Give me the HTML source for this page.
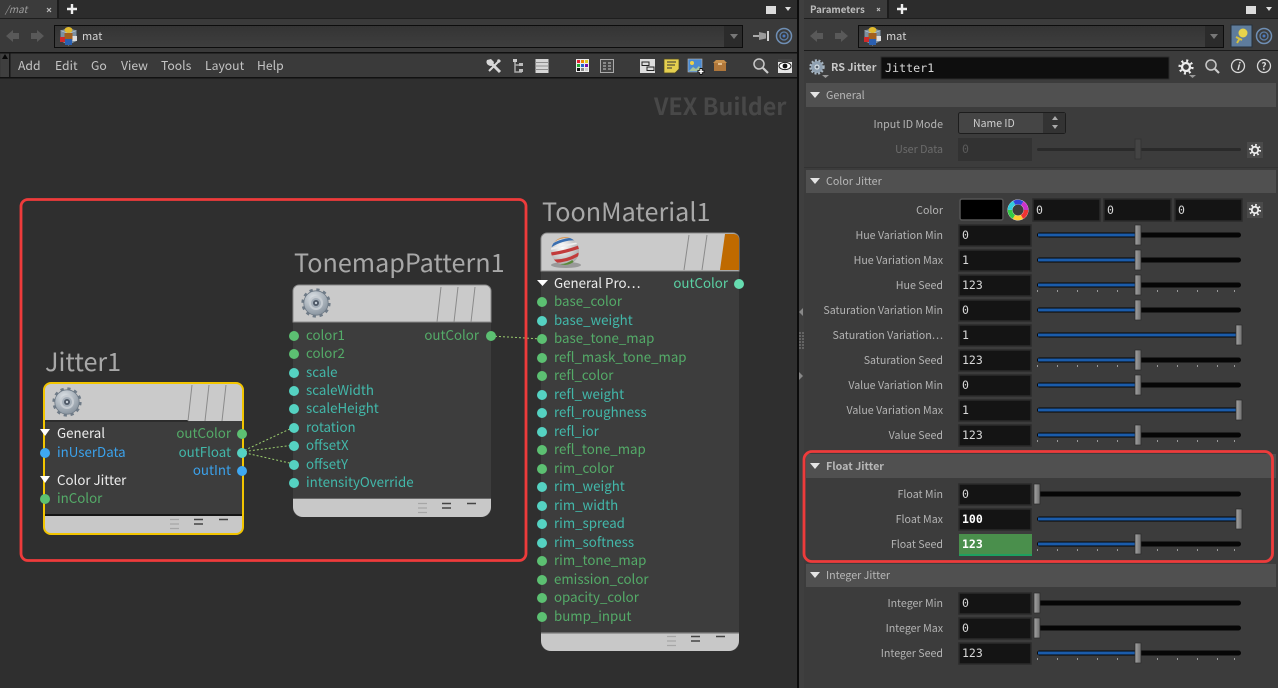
<!DOCTYPE html>
<html><head><meta charset="utf-8"><style>
html,body{margin:0;padding:0;background:#2f2f2f;width:1278px;height:688px;overflow:hidden}
svg{display:block;position:absolute;left:0;top:0}
text{font-family:"Noto Sans CJK JP","Liberation Sans",sans-serif;white-space:pre}
.m{font-size:12.2px;fill:#c4c4c4}
.t{font-size:25.200px;fill:#a8a8a8}
.n{font-size:13.300px}
.g{fill:#54ab68}.c{fill:#42b8aa}.b{fill:#3ba2ec}.w{fill:#ececec}
.l{font-size:10.650px;fill:#b4b4b4;text-anchor:end}
.s{font-size:10.700px;fill:#b8b8b8}
.v{font-family:"DejaVu Sans Mono","Liberation Mono",monospace;font-size:11.500px;fill:#d8d8d8}
</style></head><body>
<svg width="1278" height="688" viewBox="0 0 1278 688" xmlns="http://www.w3.org/2000/svg">
<defs>
<linearGradient id="fld" x1="0" y1="0" x2="0" y2="1"><stop offset="0" stop-color="#343434"/><stop offset="1" stop-color="#3e3e3e"/></linearGradient>
<linearGradient id="hnd" x1="0" y1="0" x2="1" y2="0"><stop offset="0" stop-color="#a4a4a4"/><stop offset="1" stop-color="#6e6e6e"/></linearGradient>
<radialGradient id="ball" cx=".4" cy=".35" r=".75"><stop offset="0" stop-color="#fff"/><stop offset="1" stop-color="#a0a0a0"/></radialGradient>
<radialGradient id="metal" cx=".4" cy=".3" r=".8"><stop offset="0" stop-color="#dfe4e8"/><stop offset="1" stop-color="#7e8a96"/></radialGradient>
<clipPath id="bc"><circle cx="565" cy="251" r="14"/></clipPath>
<g id="gear"><circle r="13" fill="none" stroke="#6f7b87" stroke-width="3.200" stroke-dasharray="3.200 3.600"/><circle r="12.200" fill="url(#metal)"/><circle r="12.200" fill="none" stroke="#6d7985" stroke-width=".8"/><circle r="7" fill="#c6ccd2"/><circle r="5" fill="#a4aeb8"/><circle r="3" fill="#4e5866"/><circle r="1.200" fill="#c8d0d8"/></g>
<g id="gs"><circle r="6" fill="#8fa0b0"/><circle r="6.600" fill="none" stroke="#a8b6c2" stroke-width="2.200" stroke-dasharray="2 1.600"/><circle r="2.600" fill="#d4dce2"/><circle r="1.300" fill="#55606c"/></g>
<g id="cog"><circle r="4" fill="none" stroke="#ececec" stroke-width="2.300"/><circle r="6.300" fill="none" stroke="#ececec" stroke-width="2.600" stroke-dasharray="2 2.950"/></g>
<g id="mat"><path d="M0 -8l8 2.500v10.500l-8 4l-8-4v-10.500z" fill="#8fa6bb" opacity=".8"/><path d="M-8 -5.500l8 3 8-3M0 -2.500v12" stroke="#c2ced8" stroke-width=".6" fill="none"/><ellipse cx="0" cy="-6" rx="4" ry="3" fill="#e0ba2e"/><rect x="-4" y="-3" width="8" height="7" fill="#a2601e"/><rect x="-3.500" y="3" width="7" height="6" fill="#2a5fb0"/><rect x="-8.500" y="1" width="5" height="5" fill="#cf2a2a"/><rect x="4" y="0" width="4.500" height="5" fill="#ddd"/></g>
<g id="sl"><rect x="1037" y="-2.500" width="204" height="5" rx="2.500" fill="#060606"/></g>
<g id="hn"><rect x="-3" y="-10" width="6" height="20" fill="url(#hnd)" stroke="#2a2a2a" stroke-width=".7"/></g>
<g id="tk"><path d="M1037.500 5v2M1057.500 5v2M1077.500 5v2M1097.500 5v2M1117.500 5v2M1157.500 5v2M1177.500 5v2M1197.500 5v2M1217.500 5v2M1234.500 5v2" stroke="#999" stroke-width="1"/></g>
<g id="mid"><use href="#sl"/><rect x="1038" y="-1.500" width="100" height="3" fill="#1b5cab"/><use href="#hn" x="1138"/></g>
<g id="full"><use href="#sl"/><rect x="1038" y="-1.500" width="201" height="3" fill="#1b5cab"/><use href="#hn" x="1239"/></g>
<g id="dn"><path d="M-5 -3h10l-5 6z" fill="#e4e4e4"/></g>
<g id="fm"><path d="M0 .5h9M0 5h9M0 9.500h9" stroke="#a6a6a6" stroke-width="1.300"/><path d="M24 .5h9M24 5h9" stroke="#444" stroke-width="1.500"/><path d="M49 .5h9" stroke="#444" stroke-width="1.500"/></g>
</defs>

<!-- base -->
<rect width="1278" height="688" fill="#2f2f2f"/>
<rect width="798" height="78" fill="#3a3a3a"/>
<rect width="798" height="18" fill="#2c2c2c"/>
<rect width="57" height="18" fill="#3b3b3b"/>
<rect x="57" width="2" height="18" fill="#1c1c1c"/>
<text x="5" y="13" font-size="10" font-style="italic" fill="#9c9c9c">/mat</text>
<path d="M47 8l4 4m0-4l-4 4" stroke="#bbb" stroke-width="1.200"/>
<path d="M72 4v10M67 9h10" stroke="#eee" stroke-width="2.400"/>
<rect x="766" y="6" width="10" height="8" fill="#dcdcdc"/><path d="M785 7h6l-3 4z" fill="#ddd"/>
<rect y="18" width="798" height="1" fill="#1e1e1e"/>
<path d="M6 36l7-6v3h6v6h-6v3z" fill="#595959"/><path d="M44 36l-7-6v3h-6v6h6v3z" fill="#595959"/>
<rect x="54.500" y="25.500" width="688" height="22" fill="url(#fld)" stroke="#0d0d0d"/>
<rect x="724" y="26" width="18" height="21" fill="#2b2b2b"/><path d="M730 34h8l-4 5z" fill="#777"/>
<use href="#mat" x="68.500" y="36"/>
<text x="82" y="40" font-size="11" fill="#d4d4d4">mat</text>
<path d="M753 36h6" stroke="#cfcfcf" stroke-width="1.500"/><path d="M759 32l7 1.500v5l-7 1.500z" fill="#9a9a9a"/><path d="M768 31v10" stroke="#cfcfcf" stroke-width="2"/>
<circle cx="784" cy="36" r="7.500" fill="none" stroke="#6f8fb5" stroke-width="1.500"/><circle cx="784" cy="36" r="4" fill="none" stroke="#5d7fa8" stroke-width="1.300"/><circle cx="784" cy="36" r="1.500" fill="#4a7ac0"/>
<rect y="52" width="798" height="1.500" fill="#111"/>
<rect y="77" width="798" height="1.500" fill="#111"/>
<rect x="9" y="53" width="1.500" height="24" fill="#151515"/>
<rect x="1" y="54" width="8" height="23" fill="#444" opacity=".5"/>
<path d="M2 59l3-5 3 5z" fill="#080808"/>
<text x="18" y="70" class="m">Add</text><text x="55" y="70" class="m">Edit</text><text x="91" y="70" class="m">Go</text><text x="121" y="70" class="m">View</text><text x="161" y="70" class="m">Tools</text><text x="205" y="70" class="m">Layout</text><text x="257" y="70" class="m">Help</text>
<!-- toolbar icons -->
<path d="M490 62l10 10" stroke="#d8d8d8" stroke-width="3"/><path d="M500 60l-11 11" stroke="#d8d8d8" stroke-width="2"/><path d="M487 60a4 4 0 0 0 6 5l1-3-3-3z" fill="#d8d8d8"/><path d="M498 59l3 2-2 2-2-2z" fill="#d8d8d8"/>
<path d="M515 60v12h7M515 65h7" stroke="#aaa" stroke-width="1.500" fill="none"/><rect x="513" y="59" width="4" height="3" fill="#ccc"/><rect x="519" y="63" width="4" height="3" fill="#bbb"/><rect x="519" y="69" width="4" height="3" fill="#bbb"/>
<rect x="535.500" y="59" width="13" height="14" fill="#d6d6d6"/><path d="M535 62.500h14M535 66h14M535 69.500h14" stroke="#8d8d8d"/>
<rect x="576" y="59" width="13" height="13" fill="#eee"/><rect x="577" y="60" width="3" height="3" fill="#d23"/><rect x="581" y="60" width="3" height="3" fill="#e80"/><rect x="585" y="60" width="3" height="3" fill="#dc2"/><rect x="577" y="64" width="3" height="3" fill="#2a3"/><rect x="581" y="64" width="3" height="3" fill="#26c"/><rect x="585" y="64" width="3" height="3" fill="#71a"/><rect x="577" y="68" width="3" height="3" fill="#111"/><rect x="581" y="68" width="3" height="3" fill="#888"/><rect x="585" y="68" width="3" height="3" fill="#ccc"/>
<rect x="600.500" y="59.500" width="13" height="13" fill="#444" stroke="#aaa"/><path d="M603 63h3M608 63h3M603 66h3M608 66h3M603 69h3M608 69h3" stroke="#ccc"/>
<rect x="640" y="59" width="15" height="14" fill="#ddd"/><rect x="642" y="62" width="7" height="3.500" fill="none" stroke="#222"/><rect x="647" y="67" width="7" height="3.500" fill="none" stroke="#222"/>
<path d="M664 59h15v10l-4 4h-11z" fill="#e5cf4f" stroke="#4a4420" stroke-width=".7"/><path d="M667 62h9M667 65h8M667 68h5" stroke="#333"/>
<rect x="688" y="59" width="14" height="13" fill="#4a8ad0" stroke="#bbb" stroke-width=".6"/><circle cx="692" cy="63" r="2" fill="#ecd04a"/><path d="M689 71l4-4 3 2 3-3 3 5z" fill="#a6c49a"/><path d="M701 68v7M697.500 71.500h7" stroke="#111" stroke-width="3"/><path d="M701 69v5M698.500 71.500h5" stroke="#fff" stroke-width="1.500"/>
<path d="M713 63l3-3h8l3 3z" fill="#c8904c"/><rect x="714" y="63" width="12" height="8" fill="#b0773a"/><rect x="718" y="63" width="4" height="2" fill="#e3c08f"/>
<circle cx="759" cy="64" r="5" fill="#4a4a4a" stroke="#c8c8c8" stroke-width="1.500"/><path d="M763 68l5 5" stroke="#ccc" stroke-width="2.200"/>
<rect x="778" y="59" width="14" height="14" fill="#e6e6e6"/><rect x="778" y="59" width="14" height="3" fill="#444"/><ellipse cx="785" cy="66" rx="6" ry="3.600" fill="#fff" stroke="#222"/><circle cx="785" cy="66" r="2.400" fill="#111"/>

<!-- network title -->
<text x="654" y="115" font-size="23.300" font-weight="700" fill="#484848">VEX Builder</text>

<!-- wires -->
<path d="M241 452L294 427M241 452L294 445M241 452L294 464M491 336L542 339" stroke="#9ccf6f" stroke-width="1" stroke-dasharray="2 2" fill="none"/>

<!-- red box -->
<rect x="21" y="199.500" width="505" height="361" rx="7" fill="none" stroke="#ee3b3b" stroke-width="2.800"/>

<!-- Jitter1 -->
<text x="45" y="371" class="t">Jitter1</text>
<rect x="44" y="383" width="199" height="151" rx="7" fill="#3d3d3d"/>
<path d="M44 421v-31a7 7 0 0 1 7-7h185a7 7 0 0 1 7 7v31z" fill="#cacaca"/>
<rect x="44" y="420" width="144" height="2" fill="#2c2c2c"/>
<path d="M188 421l4-36M205 421l4-36M222 421l4-36" stroke="#8a8a8a" fill="none"/>
<use href="#gear" x="67" y="402"/>
<path d="M44 516h199v11a7 7 0 0 1-7 7h-185a7 7 0 0 1-7-7z" fill="#c8c8c8"/>
<rect x="44" y="514" width="199" height="2" fill="#151515"/>
<use href="#fm" x="170" y="519"/>
<rect x="44" y="383" width="199" height="151" rx="7" fill="none" stroke="#f2c500" stroke-width="2"/>
<path d="M40 429h10l-5 7z" fill="#fff"/><path d="M40 476h10l-5 7z" fill="#fff"/>
<text x="57" y="438" class="n w">General</text><text x="57" y="457" class="n b">inUserData</text><text x="57" y="485" class="n w">Color Jitter</text><text x="57" y="503" class="n g">inColor</text>
<text x="231" y="438" class="n g" text-anchor="end">outColor</text><text x="231" y="457" class="n c" text-anchor="end">outFloat</text><text x="231" y="475" class="n b" text-anchor="end">outInt</text>
<circle cx="45" cy="453" r="5" fill="#3ea8f2"/><circle cx="45" cy="499" r="5" fill="#5cc072"/>
<circle cx="242" cy="434" r="5" fill="#5cc072"/><circle cx="242" cy="453" r="5" fill="#55d2c2"/><circle cx="242" cy="471" r="5" fill="#3ea8f2"/>

<!-- Tonemap -->
<text x="294" y="272" class="t">TonemapPattern1</text>
<rect x="293" y="285" width="198" height="232" rx="8" fill="#3d3d3d"/>
<path d="M293 322v-31a6 6 0 0 1 6-6h186a6 6 0 0 1 6 6v31z" fill="#cacaca" stroke="#8a8a8a" stroke-width="1"/>
<path d="M437 322l4-35M454 322l4-35M471 322l4-35" stroke="#8a8a8a" fill="none"/>
<use href="#gear" x="316" y="303"/>
<path d="M293 499h198v8a10 10 0 0 1-10 10h-178a10 10 0 0 1-10-10z" fill="#c8c8c8"/>
<rect x="293" y="498" width="198" height="1" fill="#6a6a6a"/>
<use href="#fm" x="418" y="503"/>
<text x="306" y="340" class="n g">color1</text><text x="306" y="358" class="n g">color2</text><text x="306" y="377" class="n c">scale</text><text x="306" y="395" class="n c">scaleWidth</text><text x="306" y="413" class="n c">scaleHeight</text><text x="306" y="432" class="n c">rotation</text><text x="306" y="450" class="n c">offsetX</text><text x="306" y="469" class="n c">offsetY</text><text x="306" y="487" class="n c">intensityOverride</text>
<text x="479" y="340" class="n g" text-anchor="end">outColor</text>
<circle cx="294" cy="336" r="5" fill="#5cc072"/><circle cx="294" cy="354" r="5" fill="#5cc072"/>
<g fill="#55d2c2"><circle cx="294" cy="373" r="5"/><circle cx="294" cy="391" r="5"/><circle cx="294" cy="409" r="5"/><circle cx="294" cy="428" r="5"/><circle cx="294" cy="446" r="5"/><circle cx="294" cy="465" r="5"/><circle cx="294" cy="483" r="5"/></g>
<circle cx="491" cy="336" r="5" fill="#5cc072"/>

<!-- Toon -->
<text x="542" y="221" class="t">ToonMaterial1</text>
<rect x="541" y="233" width="198" height="418" rx="8" fill="#3d3d3d"/>
<path d="M541 271v-32a6 6 0 0 1 6-6h186a6 6 0 0 1 6 6v32z" fill="#cacaca" stroke="#8a8a8a" stroke-width="1"/>
<path d="M684 270l5-35M702 270l5-35" stroke="#8a8a8a" fill="none"/>
<path d="M720 270l5-36h9a5 5 0 0 1 5 5v31z" fill="#bf6a00"/>
<ellipse cx="566" cy="265" rx="15" ry="3" fill="#999"/>
<circle cx="565" cy="251" r="14" fill="url(#ball)"/>
<g clip-path="url(#bc)" fill="none"><path d="M551 246q12-8 28-7" stroke="#3a6fb0" stroke-width="2.600"/><path d="M551 249q14-4 28-6" stroke="#eee" stroke-width="1.800"/><path d="M551 254q14-2 28-7" stroke="#c23b3b" stroke-width="3.200"/><path d="M552 261q14 1 27-7" stroke="#c23b3b" stroke-width="3.200"/><path d="M554 241q6-5 18-4" stroke="#d89a5a" stroke-width="2.400"/><path d="M558 265q8 1 15-4" stroke="#5a8a3a" stroke-width="2.400"/></g>
<path d="M541 633h198v8a10 10 0 0 1-10 10h-178a10 10 0 0 1-10-10z" fill="#c8c8c8"/>
<rect x="541" y="632" width="198" height="1.500" fill="#6a6a6a"/>
<use href="#fm" x="667" y="636"/>
<path d="M537 280h11l-5.500 6z" fill="#fff"/>
<text x="554" y="288" class="n w">General Pro…</text>
<text x="728" y="288" class="n" fill="#5bd1a4" text-anchor="end">outColor</text>
<circle cx="739" cy="284" r="5" fill="#66dcb0"/>
<text x="554" y="306" class="n g">base_color</text><text x="554" y="325" class="n c">base_weight</text><text x="554" y="343" class="n g">base_tone_map</text><text x="554" y="362" class="n g">refl_mask_tone_map</text><text x="554" y="380" class="n g">refl_color</text><text x="554" y="399" class="n c">refl_weight</text><text x="554" y="417" class="n c">refl_roughness</text><text x="554" y="436" class="n c">refl_ior</text><text x="554" y="454" class="n g">refl_tone_map</text><text x="554" y="473" class="n g">rim_color</text><text x="554" y="491" class="n c">rim_weight</text><text x="554" y="510" class="n c">rim_width</text><text x="554" y="528" class="n c">rim_spread</text><text x="554" y="547" class="n c">rim_softness</text><text x="554" y="565" class="n g">rim_tone_map</text><text x="554" y="584" class="n g">emission_color</text><text x="554" y="602" class="n g">opacity_color</text><text x="554" y="621" class="n g">bump_input</text>
<g fill="#5cc072"><circle cx="542" cy="302" r="5"/><circle cx="542" cy="339" r="5"/><circle cx="542" cy="358" r="5"/><circle cx="542" cy="376" r="5"/><circle cx="542" cy="450" r="5"/><circle cx="542" cy="469" r="5"/><circle cx="542" cy="561" r="5"/><circle cx="542" cy="580" r="5"/><circle cx="542" cy="598" r="5"/><circle cx="542" cy="617" r="5"/></g>
<g fill="#55d2c2"><circle cx="542" cy="321" r="5"/><circle cx="542" cy="395" r="5"/><circle cx="542" cy="413" r="5"/><circle cx="542" cy="432" r="5"/><circle cx="542" cy="487" r="5"/><circle cx="542" cy="506" r="5"/><circle cx="542" cy="524" r="5"/><circle cx="542" cy="543" r="5"/></g>

<!-- divider -->
<rect x="797" y="0" width="2" height="688" fill="#0c0c0c"/>
<rect x="799" y="0" width="5" height="688" fill="#3f3f3f"/>
<path d="M803 308l-4 4 4 4z" fill="#888"/><path d="M799 372l4 4-4 4z" fill="#888"/>
<path d="M799 333h2M802 333h2M799 336h2M802 336h2M799 339h2M802 339h2M799 342h2M802 342h2M799 345h2M802 345h2M799 348h2M802 348h2" stroke="#888"/>

<!-- right panel -->
<rect x="804" width="474" height="688" fill="#3c3c3c"/>
<rect x="804" width="474" height="18" fill="#2c2c2c"/>
<rect x="804" width="83" height="18" fill="#3b3b3b"/><rect x="887" width="2" height="18" fill="#1c1c1c"/>
<text x="810" y="13" font-size="9.700" font-weight="700" fill="#bcbcbc">Parameters</text>
<path d="M877 8l3 3m0-3l-3 3" stroke="#bbb" stroke-width="1.100"/>
<path d="M902 4v10M897 9h10" stroke="#eee" stroke-width="2.400"/>
<rect x="1246" y="6" width="10" height="8" fill="#dcdcdc"/><path d="M1266 7h6l-3 4z" fill="#ddd"/>
<rect x="804" y="18" width="474" height="1" fill="#1e1e1e"/>
<path d="M810 36l7-6v3h6v6h-6v3z" fill="#595959"/><path d="M848 36l-7-6v3h-6v6h6v3z" fill="#595959"/>
<rect x="858.500" y="25.500" width="365" height="22" fill="url(#fld)" stroke="#0d0d0d"/>
<rect x="1205" y="26" width="18" height="21" fill="#2b2b2b"/><path d="M1210 34h8l-4 5z" fill="#777"/>
<use href="#mat" x="872.500" y="36"/>
<text x="886" y="40" font-size="11" fill="#d4d4d4">mat</text>
<rect x="1231" y="25" width="21" height="22" fill="#5e7c9c" stroke="#26303a"/>
<circle cx="1243" cy="33" r="4.500" fill="#e8d44a"/><path d="M1240 38l-3 5M1236 37l6 3" stroke="#d8c23c" stroke-width="2"/>
<circle cx="1264" cy="36" r="7.500" fill="none" stroke="#6f8fb5" stroke-width="1.500"/><circle cx="1264" cy="36" r="4" fill="none" stroke="#5d7fa8" stroke-width="1.300"/><circle cx="1264" cy="36" r="1.500" fill="#4a7ac0"/>
<rect x="804" y="50" width="474" height="1" fill="#1b1b1b"/>
<use href="#gs" x="817" y="67"/><path d="M822 75h7l-3.500 3z" fill="#999"/>
<text x="831" y="71" font-size="10.800" font-weight="700" fill="#c8c8c8">RS Jitter</text>
<rect x="881" y="57" width="288" height="22" fill="#0e0e0e" stroke="#2b2b2b"/>
<text x="885" y="72" class="v" style="font-size:11.700px">Jitter1</text>
<use href="#cog" x="1186" y="67"/><path d="M1189 75h7l-3.500 3z" fill="#999"/>
<circle cx="1211" cy="65" r="5" fill="#4a4a4a" stroke="#c8c8c8" stroke-width="1.500"/><path d="M1215 69l4 4" stroke="#ccc" stroke-width="2.200"/>
<circle cx="1238" cy="66" r="6.500" fill="none" stroke="#d8d8d8" stroke-width="1.300"/><text x="1238" y="70" font-size="10" font-style="italic" font-weight="700" fill="#e0e0e0" text-anchor="middle">i</text>
<circle cx="1264" cy="66" r="6.500" fill="none" stroke="#d8d8d8" stroke-width="1.300"/><text x="1264" y="70" font-size="10" font-weight="700" fill="#e0e0e0" text-anchor="middle">?</text>

<!-- sections -->
<rect x="806" y="83" width="470" height="24" fill="#505050"/>
<use href="#dn" x="815" y="95"/><text x="826" y="99" class="s">General</text>
<text x="943" y="128" class="l">Input ID Mode</text>
<rect x="958.500" y="112.500" width="107" height="21" rx="2" fill="#454545" stroke="#1d1d1d"/>
<rect x="1043" y="113" width="22" height="20" fill="#333"/>
<path d="M1052 120l3-4 3 4zM1052 125l3 4 3-4z" fill="#aaa"/>
<text x="973" y="127" font-size="10.500" fill="#d0d0d0">Name ID</text>
<text x="943" y="153" class="l" style="fill:#6c6c6c">User Data</text>
<rect x="958" y="138" width="74" height="23" fill="#323232"/>
<text x="962" y="153" class="v" style="fill:#5a5a5a">0</text>
<rect x="1037" y="148" width="204" height="3" rx="1.500" fill="#2a2a2a"/>
<rect x="1135" y="139" width="6" height="20" fill="#444" stroke="#333"/>
<rect x="1247" y="142" width="16" height="16" fill="#4a4a4a"/><use href="#cog" transform="translate(1255 150) scale(.8)"/>
<rect x="804" y="167" width="474" height="1" fill="#333"/>

<rect x="806" y="170" width="470" height="23" fill="#505050"/>
<use href="#dn" x="815" y="181"/><text x="826" y="185" class="s">Color Jitter</text>
<text x="943" y="214" class="l">Color</text>
<rect x="960" y="199" width="43" height="21" rx="2" fill="#000" stroke="#555" stroke-width="1.500"/>
<circle cx="1018" cy="210" r="8" fill="none" stroke="#fff" stroke-width="5"/>
<circle cx="1018" cy="210" r="8" fill="none" stroke="#e33" stroke-width="4.500" stroke-dasharray="8.400 42"/><circle cx="1018" cy="210" r="8" fill="none" stroke="#fc3" stroke-width="4.500" stroke-dasharray="8.400 42" stroke-dashoffset="-8.400"/><circle cx="1018" cy="210" r="8" fill="none" stroke="#3c4" stroke-width="4.500" stroke-dasharray="8.400 42" stroke-dashoffset="-16.800"/><circle cx="1018" cy="210" r="8" fill="none" stroke="#3cd" stroke-width="4.500" stroke-dasharray="8.400 42" stroke-dashoffset="-25.200"/><circle cx="1018" cy="210" r="8" fill="none" stroke="#34d" stroke-width="4.500" stroke-dasharray="8.400 42" stroke-dashoffset="-33.600"/><circle cx="1018" cy="210" r="8" fill="none" stroke="#c3c" stroke-width="4.500" stroke-dasharray="8.400 42" stroke-dashoffset="-42"/>
<g fill="#141414" stroke="#2b2b2b" stroke-width="1.500"><rect x="1033" y="199" width="67" height="22"/><rect x="1104" y="199" width="67" height="22"/><rect x="1175" y="199" width="67" height="22"/></g>
<text x="1036" y="214" class="v">0</text><text x="1107" y="214" class="v">0</text><text x="1178" y="214" class="v">0</text>
<rect x="1247" y="202" width="16" height="16" fill="#4a4a4a"/><use href="#cog" transform="translate(1255 210) scale(.8)"/>

<g fill="#141414" stroke="#2b2b2b" stroke-width="1.500">
<rect x="959" y="225" width="72" height="21"/><rect x="959" y="250" width="72" height="21"/><rect x="959" y="275" width="72" height="21"/><rect x="959" y="300" width="72" height="21"/><rect x="959" y="325" width="72" height="21"/><rect x="959" y="350" width="72" height="21"/><rect x="959" y="375" width="72" height="21"/><rect x="959" y="400" width="72" height="21"/><rect x="959" y="425" width="72" height="21"/>
<rect x="959" y="484" width="72" height="21"/><rect x="959" y="509" width="72" height="21"/>
<rect x="959" y="593" width="72" height="21"/><rect x="959" y="618" width="72" height="21"/><rect x="959" y="643" width="72" height="21"/>
</g>
<text x="943" y="239" class="l">Hue Variation Min</text><text x="962" y="239" class="v">0</text><use href="#mid" y="235"/>
<text x="943" y="264" class="l">Hue Variation Max</text><text x="962" y="264" class="v">1</text><use href="#mid" y="260"/>
<text x="943" y="289" class="l">Hue Seed</text><text x="962" y="289" class="v">123</text><use href="#mid" y="285"/><use href="#tk" y="285"/>
<text x="943" y="314" class="l">Saturation Variation Min</text><text x="962" y="314" class="v">0</text><use href="#mid" y="310"/>
<text x="943" y="339" class="l">Saturation Variation…</text><text x="962" y="339" class="v">1</text><use href="#full" y="335"/>
<text x="943" y="364" class="l">Saturation Seed</text><text x="962" y="364" class="v">123</text><use href="#mid" y="360"/><use href="#tk" y="360"/>
<text x="943" y="389" class="l">Value Variation Min</text><text x="962" y="389" class="v">0</text><use href="#mid" y="385"/>
<text x="943" y="414" class="l">Value Variation Max</text><text x="962" y="414" class="v">1</text><use href="#full" y="410"/>
<text x="943" y="439" class="l">Value Seed</text><text x="962" y="439" class="v">123</text><use href="#mid" y="435"/><use href="#tk" y="435"/>

<rect x="806" y="454" width="470" height="24" fill="#505050"/>
<use href="#dn" x="815" y="466"/><text x="826" y="470" class="s" style="font-weight:700">Float Jitter</text>
<text x="943" y="498" class="l">Float Min</text><text x="962" y="498" class="v">0</text><use href="#sl" y="494"/><use href="#hn" x="1037" y="494"/>
<text x="943" y="523" class="l">Float Max</text><text x="962" y="523" class="v" style="font-weight:700;fill:#fff">100</text><use href="#full" y="519"/>
<text x="943" y="548" class="l">Float Seed</text>
<rect x="959" y="534" width="73" height="22" fill="#4a8f4c"/><rect x="959" y="554" width="73" height="2" fill="#1ea060"/>
<text x="962" y="548" class="v" style="font-weight:700;fill:#fff">123</text><use href="#mid" y="544"/><use href="#tk" y="544"/>
<rect x="804" y="451.500" width="468.500" height="110" rx="8" fill="none" stroke="#ee3b3b" stroke-width="2.800"/>

<rect x="806" y="564" width="470" height="23" fill="#505050"/>
<use href="#dn" x="815" y="575"/><text x="826" y="579" class="s">Integer Jitter</text>
<text x="943" y="607" class="l">Integer Min</text><text x="962" y="607" class="v">0</text><use href="#sl" y="603"/><use href="#hn" x="1037" y="603"/>
<text x="943" y="632" class="l">Integer Max</text><text x="962" y="632" class="v">0</text><use href="#sl" y="628"/><use href="#hn" x="1037" y="628"/>
<text x="943" y="657" class="l">Integer Seed</text><text x="962" y="657" class="v">123</text><use href="#mid" y="653"/><use href="#tk" y="653"/>
</svg>
</body></html>
